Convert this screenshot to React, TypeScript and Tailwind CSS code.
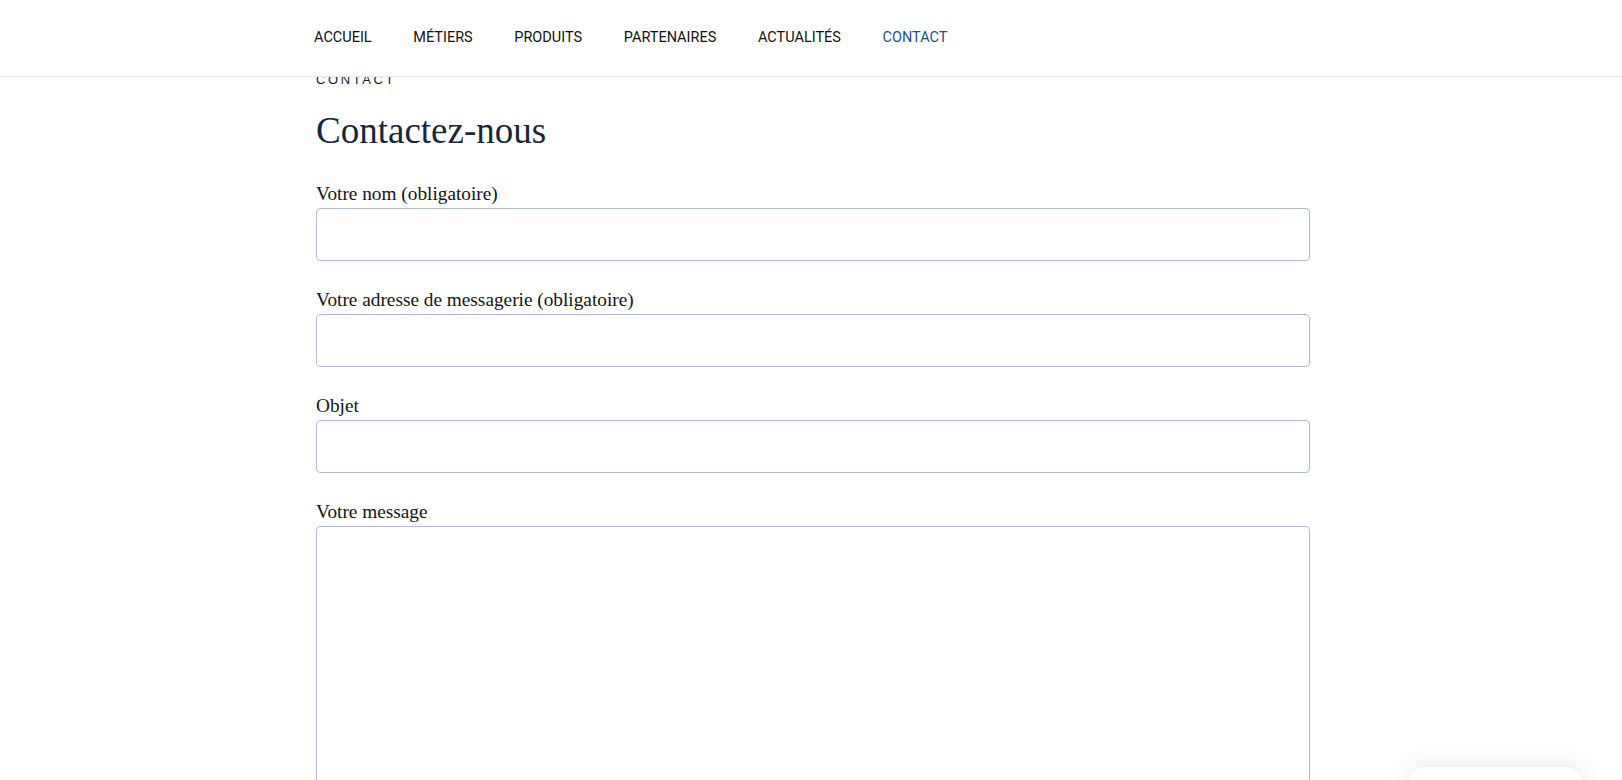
const navItems = [
  { label: 'ACCUEIL', active: false },
  { label: 'MÉTIERS', active: false },
  { label: 'PRODUITS', active: false },
  { label: 'PARTENAIRES', active: false },
  { label: 'ACTUALITÉS', active: false },
  { label: 'CONTACT', active: true },
];

const fields = [
  { id: 'nom', label: 'Votre nom (obligatoire)' },
  { id: 'email', label: 'Votre adresse de messagerie (obligatoire)' },
  { id: 'objet', label: 'Objet' },
];

function Header() {
  return (
    <header className="absolute top-0 left-0 right-0 z-10 h-[77px] bg-white border-b border-[#e6ecf3]">
      <div className="mx-auto w-[994px] h-full flex items-center">
        <nav className="flex items-center gap-[41.6px] font-['Roboto',sans-serif] text-[14.5px] leading-5">
          {navItems.map((item) => (
            <a
              key={item.label}
              href="#"
              className={item.active ? 'text-[#1f4f8f]' : 'text-[#111]'}
            >
              {item.label}
            </a>
          ))}
        </nav>
      </div>
    </header>
  );
}

export default function App() {
  return (
    <div className="relative h-[780px] overflow-hidden bg-white">
      <Header />

      <main className="ml-[calc(50%-495px)] w-[994px] pt-[70px] font-['Liberation_Serif',serif]">
        <p className="font-['Liberation_Sans',sans-serif] text-[13px] leading-5 tracking-[0.2em] text-[#1b1b1b]">
          CONTACT
        </p>
        <h1 className="mt-[19px] text-[37px] leading-[44px] text-[#17263a]">Contactez-nous</h1>

        <form className="mt-[28px]">
          {fields.map((f) => (
            <div key={f.id} className="mb-[26px]">
              <label htmlFor={f.id} className="block pt-[1px] mb-[2px] text-[19.3px] leading-[24px] text-[#141414]">
                {f.label}
              </label>
              <input
                id={f.id}
                type="text"
                className="block w-full h-[53px] rounded border border-[#a9bedb] bg-white px-3 outline-none"
              />
            </div>
          ))}
          <div>
            <label htmlFor="message" className="block pt-[1px] mb-[2px] text-[19.3px] leading-[24px] text-[#141414]">
              Votre message
            </label>
            <textarea
              id="message"
              className="block w-full h-[320px] rounded border border-[#a9bedb] bg-white px-3 py-2 outline-none resize-none"
            />
          </div>
        </form>
      </main>

      {/* floating widget peeking at the bottom */}
      <div className="absolute left-[1408px] top-[767px] w-[175px] h-[60px] rounded-t-[18px] bg-white shadow-[0_0_28px_rgba(0,0,0,0.10)]" />
    </div>
  );
}
